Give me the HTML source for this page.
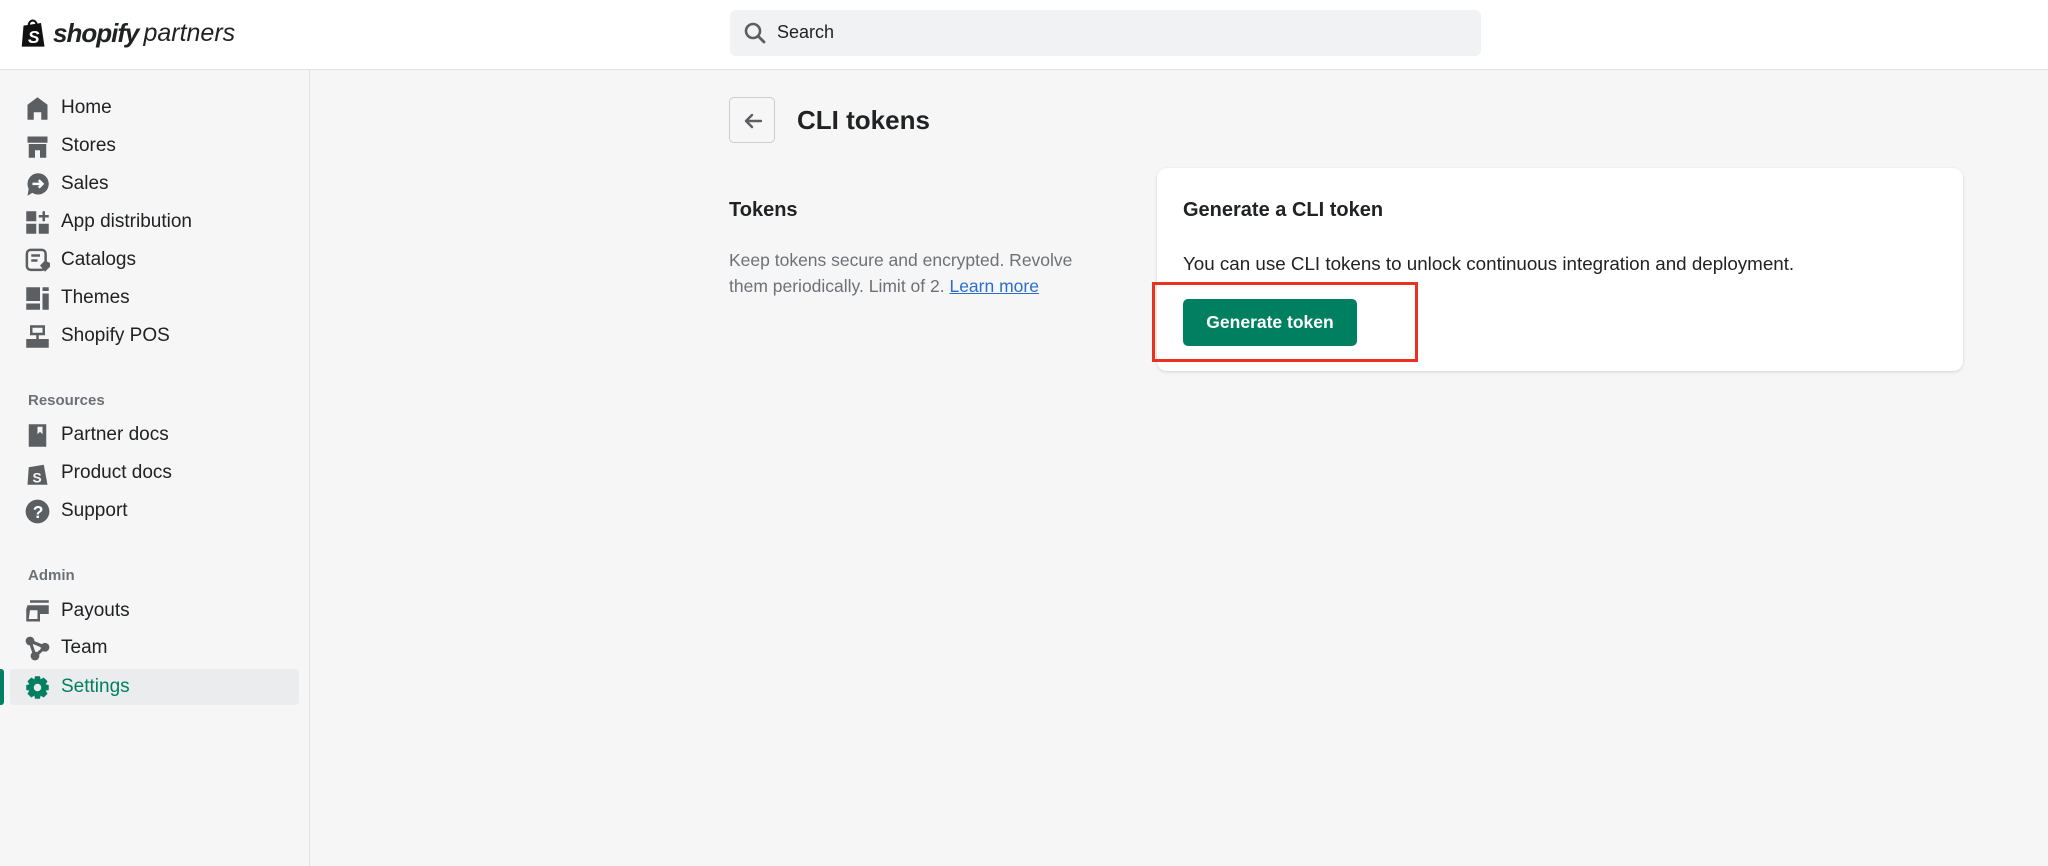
<!DOCTYPE html>
<html><head><meta charset="utf-8"><style>
*{box-sizing:border-box;margin:0;padding:0}
body{width:2048px;height:866px;overflow:hidden;background:#f6f6f7;font-family:"Liberation Sans",sans-serif;color:#202223;position:relative}
.hdr{position:absolute;left:0;top:0;width:2048px;height:70px;background:#fff;border-bottom:1px solid #e1e3e5}
.logo{position:absolute;left:20px;top:18px;display:flex;align-items:center}
.logo .s{font-weight:bold;font-style:italic;font-size:26px;letter-spacing:-1px;margin-left:5px}
.logo .p{font-style:italic;font-size:25px;margin-left:5px;color:#222}
.search{position:absolute;left:730px;top:10px;width:751px;height:46px;background:#f1f2f3;border-radius:6px}
.search span{position:absolute;left:47px;top:12px;font-size:18px;color:#202223}
.side{position:absolute;left:0;top:70px;width:310px;height:796px;background:#f6f6f7;border-right:1px solid #e1e3e5}
.it{position:absolute;left:0;height:36px;width:310px;display:flex;align-items:center;font-size:19px;color:#202223}
.it svg{position:absolute;left:25px;width:25px;height:25px}
.it span{position:absolute;left:61px}
.lbl{position:absolute;left:28px;font-size:15px;color:#6d7175;font-weight:bold}
.act{background:#ebeced;border-radius:4px;left:10px;width:289px}
.act span{left:51px;color:#008060}
.act svg{left:15px}
.bar{position:absolute;left:0;top:669px;width:4px;height:36px;background:#008060;border-radius:0 3px 3px 0}
.back{position:absolute;left:729px;top:97px;width:46px;height:46px;border:1px solid #c9cccf;border-radius:5px;background:#f6f6f7}
.title{position:absolute;left:797px;top:105px;font-size:26px;font-weight:bold}
.th{position:absolute;left:729px;top:199px;font-size:20px;font-weight:bold}
.td{position:absolute;left:729px;top:247px;font-size:17.5px;line-height:26px;color:#6d7175;width:372px}
.td a{color:#2c6ecb;text-decoration:underline}
.card{position:absolute;left:1157px;top:168px;width:806px;height:203px;background:#fff;border-radius:10px;box-shadow:0 1px 3px rgba(0,0,0,.15)}
.ct{position:absolute;left:26px;top:31px;font-size:20px;font-weight:bold}
.cb{position:absolute;left:26px;top:85px;font-size:18.8px}
.btn{position:absolute;left:1183px;top:299px;width:174px;height:47px;background:#008060;border-radius:5px;color:#fff;font-size:17.5px;display:flex;align-items:center;justify-content:center;font-weight:bold}
.red{position:absolute;left:1152px;top:282px;width:266px;height:80px;border:3px solid #e8321e}
</style></head><body>
<div class="hdr">
 <div class="logo">
  <svg width="28" height="31" viewBox="0 0 32 34"><path d="M4 8 L24 5 L28 32 L2 32 Z" fill="#111"/><path d="M10 8 C10 1 18 0 19 7" stroke="#111" stroke-width="2.5" fill="none"/><text x="9" y="28" font-size="20" font-weight="bold" font-style="italic" fill="#fff" font-family="Liberation Sans">S</text></svg>
  <span class="s">shopify</span><span class="p">partners</span>
 </div>
 <div class="search"><svg style="position:absolute;left:13px;top:11px" width="24" height="24" viewBox="0 0 24 24"><circle cx="10" cy="10" r="7" stroke="#5c5f62" stroke-width="2.6" fill="none"/><path d="M15 15 L21 21" stroke="#5c5f62" stroke-width="2.8" stroke-linecap="round"/></svg><span>Search</span></div>
</div>
<div class="side">
 <div class="it" style="top:20px"><svg viewBox="0 0 20 20"><path d="M10 1 L18 7 V19 H13 V13 H7 V19 H2 V7 Z" fill="#5c5f62"/></svg><span>Home</span></div>
 <div class="it" style="top:58px"><svg viewBox="0 0 20 20"><path d="M2 2 H18 V7 H2 Z M3 8 H17 V19 H12 V13 H8 V19 H3 Z" fill="#5c5f62"/></svg><span>Stores</span></div>
 <div class="it" style="top:96px"><svg viewBox="0 0 20 20"><circle cx="10.5" cy="9.5" r="8.5" fill="#5c5f62"/><path d="M2 19 L3 13 L7 16 Z" fill="#5c5f62"/><path d="M6 9.5 H14 M11 6.5 L14 9.5 L11 12.5" stroke="#fff" stroke-width="2" fill="none"/></svg><span>Sales</span></div>
 <div class="it" style="top:134px"><svg viewBox="0 0 20 20"><path d="M1 1 H9 V9 H1 Z M1 11 H9 V19 H1 Z M11 11 H19 V19 H11 Z" fill="#5c5f62"/><path d="M15 1 V9 M11 5 H19" stroke="#5c5f62" stroke-width="2"/></svg><span>App distribution</span></div>
 <div class="it" style="top:172px"><svg viewBox="0 0 20 20"><rect x="1.5" y="1.5" width="15" height="16" rx="3" stroke="#5c5f62" stroke-width="2" fill="none"/><path d="M5 6 H12 M5 10 H10" stroke="#5c5f62" stroke-width="2"/><path d="M12 14 L16 10 L20 12 L20 15 L16 19 Z" fill="#5c5f62"/></svg><span>Catalogs</span></div>
 <div class="it" style="top:210px"><svg viewBox="0 0 20 20"><path d="M1 1 H12 V12 H1 Z M14 1 H19 V4 H14 Z M14 6 H19 V19 H14 Z M1 14 H12 V19 H1 Z" fill="#5c5f62"/></svg><span>Themes</span></div>
 <div class="it" style="top:248px"><svg viewBox="0 0 20 20"><path d="M4 1 H16 V9 H4 Z M9 9 H11 V12 H9 Z M1 12 H19 V19 H1 Z" fill="#5c5f62"/><rect x="6" y="3" width="8" height="4" fill="#f6f6f7"/></svg><span>Shopify POS</span></div>
 <div class="lbl" style="top:322px">Resources</div>
 <div class="it" style="top:347px"><svg viewBox="0 0 20 20"><path d="M3 1 H17 V19 H3 Z" fill="#5c5f62"/><path d="M10 3 V9 L12 7 L14 9 V3" fill="#f6f6f7"/></svg><span>Partner docs</span></div>
 <div class="it" style="top:385px"><svg viewBox="0 0 20 20"><path d="M3 5 L15 3 L18 19 L2 19 Z" fill="#5c5f62"/><text x="6" y="17" font-size="11" font-weight="bold" fill="#f6f6f7" font-family="Liberation Sans">S</text></svg><span>Product docs</span></div>
 <div class="it" style="top:423px"><svg viewBox="0 0 20 20"><circle cx="10" cy="10" r="9.5" fill="#5c5f62"/><text x="6.2" y="15" font-size="14" font-weight="bold" fill="#fff" font-family="Liberation Sans">?</text></svg><span>Support</span></div>
 <div class="lbl" style="top:497px">Admin</div>
 <div class="it" style="top:523px"><svg viewBox="0 0 20 20"><path d="M4 1 H19 V3 H4 Z M2 5 H19 V12 H12 V18 H1 V8 Z" fill="#5c5f62"/><path d="M4 9 H10 V16 H3" fill="#f6f6f7"/></svg><span>Payouts</span></div>
 <div class="it" style="top:560px"><svg viewBox="0 0 20 20"><circle cx="4" cy="4" r="3.5" fill="#5c5f62"/><circle cx="16" cy="9" r="3.5" fill="#5c5f62"/><circle cx="8" cy="16" r="3.5" fill="#5c5f62"/><path d="M4 4 L16 9 L8 16 Z" stroke="#5c5f62" stroke-width="2.5" fill="none"/></svg><span>Team</span></div>
 <div class="bar" style="top:599px"></div>
 <div class="it act" style="top:599px"><svg viewBox="0 0 20 20"><path d="M8 1 H12 L12.5 3.5 L15 2 L18 5 L16.5 7.5 L19 8 V12 L16.5 12.5 L18 15 L15 18 L12.5 16.5 L12 19 H8 L7.5 16.5 L5 18 L2 15 L3.5 12.5 L1 12 V8 L3.5 7.5 L2 5 L5 2 L7.5 3.5 Z" fill="#008060"/><circle cx="10" cy="10" r="3" fill="#ebeced"/></svg><span>Settings</span></div>
</div>
<div class="back"><svg style="position:absolute;left:12px;top:12px" width="22" height="22" viewBox="0 0 22 22"><path d="M19 11 H4 M10 5 L4 11 L10 17" stroke="#5c5f62" stroke-width="2.4" fill="none" stroke-linecap="round" stroke-linejoin="round"/></svg></div>
<div class="title">CLI tokens</div>
<div class="th">Tokens</div>
<div class="td">Keep tokens secure and encrypted. Revolve them periodically. Limit of 2. <a>Learn more</a></div>
<div class="card"><div class="ct">Generate a CLI token</div><div class="cb">You can use CLI tokens to unlock continuous integration and deployment.</div></div>
<div class="btn">Generate token</div>
<div class="red"></div>
</body></html>
